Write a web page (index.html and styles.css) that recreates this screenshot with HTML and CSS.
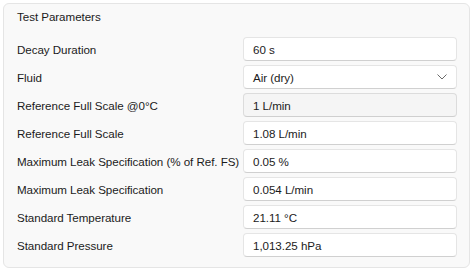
FILE: index.html
```html
<!doctype html>
<html>
<head>
<meta charset="utf-8">
<link rel="stylesheet" href="styles.css">
</head>
<body>
<div class="panel">
  <div class="title">Test Parameters</div>
  <div class="rows">
    <span class="label">Decay Duration</span>
    <div class="field">60 s</div>

    <span class="label">Fluid</span>
    <div class="field select">
      <span>Air (dry)</span>
      <svg class="chev" width="10" height="6" viewBox="0 0 10 6"><path d="M0.5 0.5 L5 5 L9.5 0.5" fill="none" stroke="#6a6a6a" stroke-width="1"/></svg>
    </div>

    <span class="label">Reference Full Scale @0°C</span>
    <div class="field disabled">1 L/min</div>

    <span class="label">Reference Full Scale</span>
    <div class="field">1.08 L/min</div>

    <span class="label">Maximum Leak Specification (% of Ref. FS)</span>
    <div class="field">0.05 %</div>

    <span class="label">Maximum Leak Specification</span>
    <div class="field">0.054 L/min</div>

    <span class="label">Standard Temperature</span>
    <div class="field">21.11 °C</div>

    <span class="label">Standard Pressure</span>
    <div class="field">1,013.25 hPa</div>
  </div>
</div>
</body>
</html>
```

FILE: styles.css
```css
body {
    margin: 0;
    background: #ffffff;
    font-family: "Liberation Sans", Arial, sans-serif;
    font-size: 11.6px;
    letter-spacing: -0.05px;
    color: #1b1b1b;
}
.panel {
    margin: 3px;
    width: 467px;
    height: 265px;
    box-sizing: border-box;
    background: #f9f9f9;
    border: 1px solid #e5e5e5;
    border-radius: 6px;
    padding: 5px 12px 10px 13px;
}
.title {
    line-height: 16px;
    height: 16px;
    margin-bottom: 12px;
}
.rows {
    display: grid;
    grid-template-columns: minmax(0, 1fr) 214px;
    grid-auto-rows: 24px;
    row-gap: 4px;
    align-items: center;
}
.label {
    line-height: 16px;
    padding-top: 1px;
    white-space: nowrap;
}
.field {
    height: 24px;
    box-sizing: border-box;
    background: #ffffff;
    border: 1px solid #e5e5e5;
    border-bottom-color: #d0d0d0;
    border-radius: 4px;
    padding: 1px 9px 0 9px;
    display: flex;
    align-items: center;
    line-height: 16px;
}
.select {
    justify-content: space-between;
}
.chev {
    margin-top: -1px;
}
.disabled {
    background: #f5f5f5;
    border-color: #dcdcdc;
    border-bottom-color: #cfcfcf;
}
```
